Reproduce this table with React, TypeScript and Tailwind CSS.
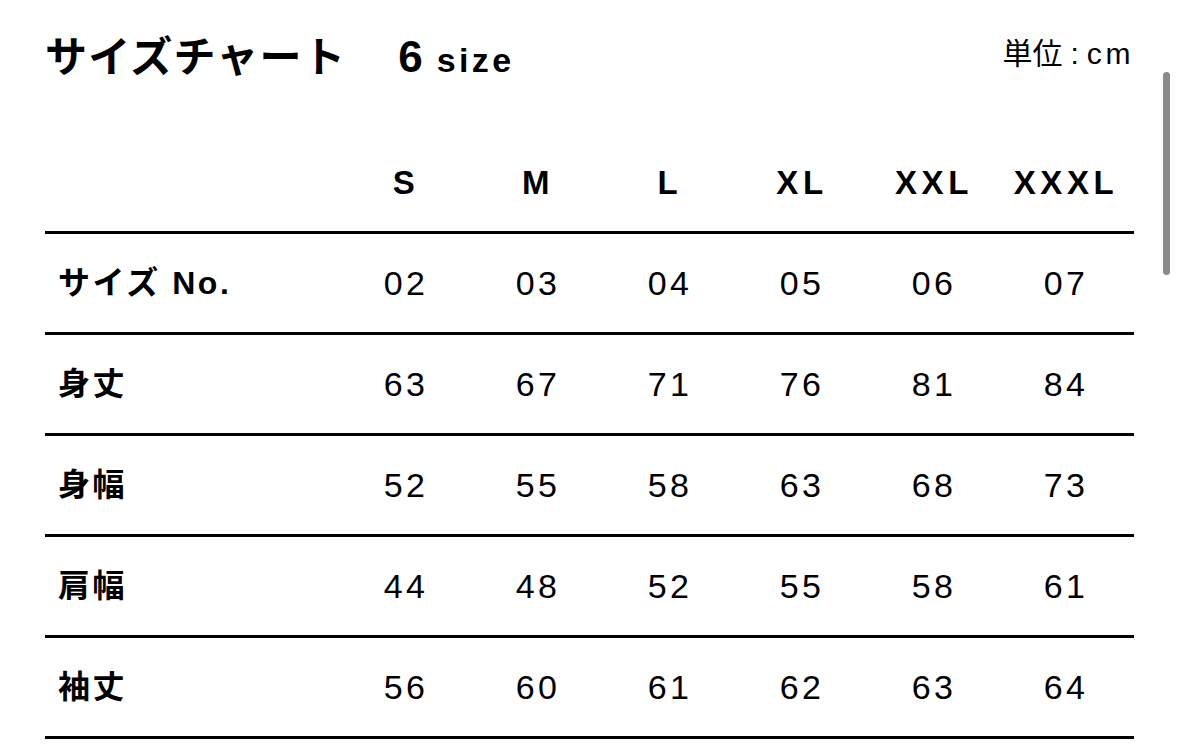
const sizes = ['S', 'M', 'L', 'XL', 'XXL', 'XXXL'];

const rows: { label: string; values: string[] }[] = [
  { label: 'サイズ No.', values: ['02', '03', '04', '05', '06', '07'] },
  { label: '身丈', values: ['63', '67', '71', '76', '81', '84'] },
  { label: '身幅', values: ['52', '55', '58', '63', '68', '73'] },
  { label: '肩幅', values: ['44', '48', '52', '55', '58', '61'] },
  { label: '袖丈', values: ['56', '60', '61', '62', '63', '64'] },
];

const font = { fontFamily: '"Liberation Sans", "Noto Sans CJK JP", sans-serif' };

export default function App() {
  return (
    <div className="relative h-[750px] w-[1179px] overflow-hidden bg-white text-black" style={font}>
      <div className="pl-[45px] pr-[45px]">
        <div className="flex h-[130px] items-start justify-between pt-[35px]">
          <h1 className="flex items-baseline font-bold leading-none">
            <span className="text-[42px] tracking-[0.03em]">サイズチャート</span>
            <span className="ml-[52px] text-[44px]">6</span>
            <span className="ml-[14px] text-[34px] tracking-[0.1em]">size</span>
          </h1>
          <div className="mt-[4px] flex items-baseline text-[30px] leading-none">
            <span>単位</span>
            <span className="mx-[8px]">:</span>
            <span className="tracking-[0.12em]">cm</span>
          </div>
        </div>

        <div className="grid h-[101px] grid-cols-[295px_repeat(6,132px)] items-center">
          <div />
          {sizes.map((s) => (
            <div key={s} className="pt-[4px] text-center text-[33px] font-bold tracking-[0.14em]">
              {s}
            </div>
          ))}
        </div>

        {rows.map((row) => (
          <div
            key={row.label}
            className="grid h-[101px] grid-cols-[295px_repeat(6,132px)] items-center border-t-[3px] border-black"
          >
            <div className="pl-[13px] text-[32px] font-bold tracking-[0.08em]">{row.label}</div>
            {row.values.map((v, i) => (
              <div key={i} className="text-center text-[34px] tracking-[0.1em]">
                {v}
              </div>
            ))}
          </div>
        ))}
        <div className="border-t-[3px] border-black" />
      </div>

      <div className="absolute right-[9px] top-[72px] h-[203px] w-[7px] rounded-full bg-[#8a8a8a]" />
    </div>
  );
}
